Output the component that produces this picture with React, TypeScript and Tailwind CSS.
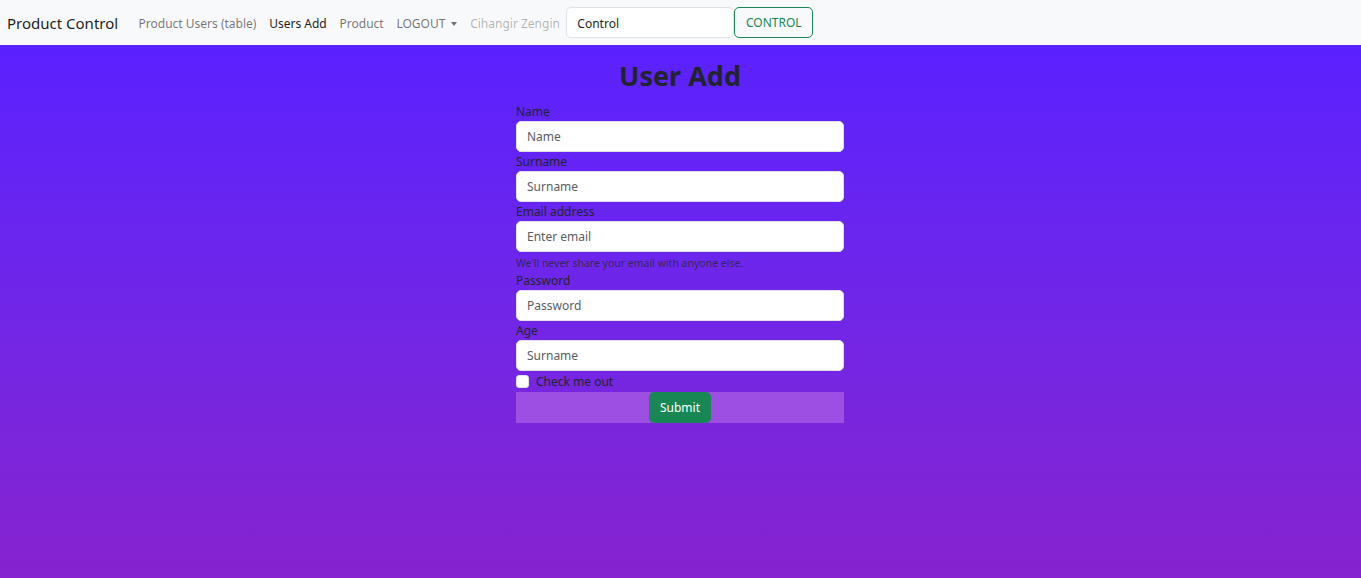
const font = { fontFamily: '"Noto Sans", "Open Sans", Arial, sans-serif' };

const Field = ({ label, placeholder, type = "text" }: { label: string; placeholder: string; type?: string }) => (
  <div className="flex flex-col">
    <label className="text-[12px] leading-[19px] text-[#212529]">{label}</label>
    <input
      type={type}
      placeholder={placeholder}
      className="h-[31px] w-full rounded-[5px] border border-[#dee2e6] bg-white px-[10px] text-[12px] text-[#212529] placeholder:text-[#595c5f] outline-none"
    />
  </div>
);

const Navbar = () => (
  <nav className="flex h-[45px] items-center bg-[#f8f9fa] pl-[7px]">
    <span className="mr-[14px] mt-[1px] text-[15px] text-black/90">Product Control</span>
    <ul className="mt-[2px] flex items-center text-[12px]">
      <li className="px-[6.4px] text-black/55">Product Users (table)</li>
      <li className="px-[6.4px] text-black/90">Users Add</li>
      <li className="px-[6.4px] text-black/55">Product</li>
      <li className="flex items-center px-[6.4px] text-black/55">
        LOGOUT
        <span className="ml-[6px] mt-[1px] h-0 w-0 border-x-[3.5px] border-t-[4px] border-x-transparent border-t-black/55" />
      </li>
      <li className="px-[6.4px] text-black/30">Cihangir Zengin</li>
    </ul>
    <form className="flex items-center">
      <input
        defaultValue="Control"
        className="h-[31px] w-[168px] rounded-[5px] border border-[#dee2e6] bg-white px-[10px] pt-[1px] text-[12px] text-[#212529] outline-none"
      />
      <button
        type="button"
        className="h-[31px] w-[79px] rounded-[5px] border-[1px] border-solid border-[#198754] bg-transparent pt-[1px] text-[12px] text-[#198754]"
      >
        CONTROL
      </button>
    </form>
  </nav>
);

export default function App() {
  return (
    <div style={font} className="flex min-h-[578px] flex-col">
      <Navbar />
      <main className="flex flex-1 justify-center bg-gradient-to-b from-[#5a20ff] to-[#8622cf] pr-[1px] pt-[12px]">
        <div className="w-[328px]">
          <h1 className="mb-[7px] text-center text-[27px] font-bold leading-[38px] text-[#212529]">User Add</h1>
          <Field label="Name" placeholder="Name" />
          <Field label="Surname" placeholder="Surname" />
          <Field label="Email address" placeholder="Enter email" type="email" />
          <p className="mt-[3px] text-[10.5px] leading-[16px] text-[#212529]/75">
            We'll never share your email with anyone else.
          </p>
          <Field label="Password" placeholder="Password" type="password" />
          <Field label="Age" placeholder="Surname" />
          <div className="flex h-[21px] items-center text-[12px] text-[#212529]">
            <span className="mr-[7px] h-[13px] w-[13px] rounded-[3px] border border-[#dee2e6] bg-white" />
            Check me out
          </div>
          <div className="flex justify-center bg-[#9d4fe4]">
            <button
              type="button"
              className="h-[31px] w-[62px] rounded-[5px] bg-[#198754] pt-[1px] text-[12px] text-white"
            >
              Submit
            </button>
          </div>
        </div>
      </main>
    </div>
  );
}
